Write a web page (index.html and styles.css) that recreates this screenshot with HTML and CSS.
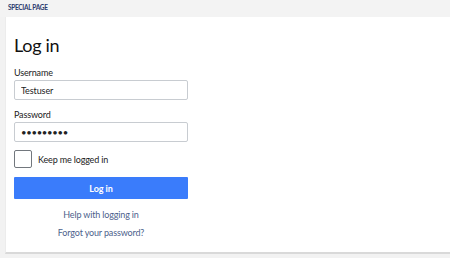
FILE: index.html
```html
<!DOCTYPE html>
<html lang="en">
<head>
    <meta charset="UTF-8">
    <meta name="viewport" content="width=device-width, initial-scale=1.0">
    <title>Log in</title>
    <link rel="stylesheet" href="styles.css">
</head>
<body>
    <div class="topbar">Special page</div>
    <div class="page">
        <h1>Log in</h1>
        <form class="login-form">
            <div class="field">
                <label for="username">Username</label>
                <input type="text" id="username" value="Testuser">
            </div>
            <div class="field">
                <label for="password">Password</label>
                <input type="password" id="password" value="123456789">
            </div>
            <div class="remember">
                <span class="checkbox"></span>
                <span>Keep me logged in</span>
            </div>
            <button type="button" class="login-btn">Log in</button>
            <div class="links">
                <a href="#">Help with logging in</a>
                <a href="#">Forgot your password?</a>
            </div>
        </form>
    </div>
</body>
</html>
```

FILE: styles.css
```css
body {
    font-family: Lato, 'Liberation Sans', sans-serif;
    margin: 0;
    padding: 0;
    background-color: #f2f2f2;
    color: #222;
    letter-spacing: -0.15px;
}
.topbar {
    height: 17px;
    line-height: 16px;
    padding-left: 8px;
    background: #f3f3f3;
    color: #2c3a6e;
    font-size: 6.5px;
    font-weight: bold;
    text-transform: uppercase;
    letter-spacing: -0.3px;
}
.page {
    margin-left: 5px;
    height: 218px;
    background: #fff;
    border-left: 1px solid #ececec;
    border-bottom: 2px solid #d9d9d9;
    padding: 17px 0 0 8px;
}
h1 {
    margin: 0 0 10px;
    font-size: 18px;
    font-weight: normal;
    line-height: 22px;
    color: #111;
    letter-spacing: -0.3px;
}
.login-form {
    width: 174px;
}
.field {
    margin-bottom: 8px;
}
.field label {
    display: block;
    font-size: 9px;
    line-height: 14px;
    color: #222;
}
.field input {
    display: block;
    box-sizing: border-box;
    width: 174px;
    height: 20px;
    margin: 0;
    padding: 0 6px;
    border: 1px solid #c8ccd1;
    border-radius: 2px;
    font-family: inherit;
    font-size: 9px;
    letter-spacing: -0.1px;
    color: #222;
    outline: none;
}
.field input[type="password"] {
    font-size: 9.5px;
    letter-spacing: -0.3px;
}
.remember {
    display: flex;
    align-items: center;
    gap: 6px;
    font-size: 9px;
    margin-bottom: 9px;
}
.checkbox {
    box-sizing: border-box;
    width: 18px;
    height: 18px;
    border: 1px solid #72777d;
    border-radius: 2px;
    background: #fff;
}
.login-btn {
    display: block;
    width: 174px;
    height: 22px;
    border: none;
    border-radius: 1px;
    background: #3a7cfb;
    color: #fff;
    font-family: inherit;
    font-size: 9px;
    font-weight: bold;
    letter-spacing: -0.1px;
    cursor: pointer;
}
.links {
    display: flex;
    flex-direction: column;
    align-items: center;
    gap: 5px;
    margin-top: 9px;
}
.links a {
    color: #4d5f8c;
    font-size: 9px;
    line-height: 13px;
    text-decoration: none;
}
```
